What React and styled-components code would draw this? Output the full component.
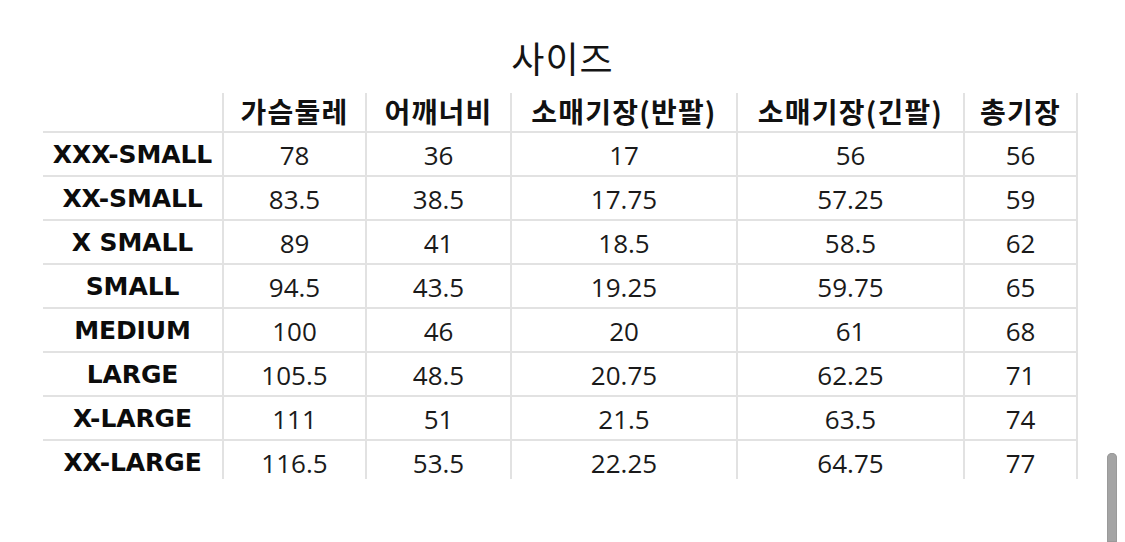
import React from "react";
import styled, { createGlobalStyle } from "styled-components";

const Global = createGlobalStyle`
  html, body { margin: 0; padding: 0; background: #ffffff; }
  body { width: 1125px; height: 542px; overflow: hidden; }
`;

const Page = styled.div`
  position: relative;
  width: 1125px;
  height: 542px;
  overflow: hidden;
  background: #fff;
`;

const Title = styled.h1`
  box-sizing: border-box;
  margin: 0;
  height: 93px;
  padding-top: 33px;
  text-align: center;
  font-family: "Noto Sans CJK KR", "Noto Sans", sans-serif;
  font-weight: 400;
  font-size: 36px;
  line-height: 48px;
  letter-spacing: 1px;
  color: #141414;
`;

const TableClip = styled.div`
  margin-left: 43px;
  width: 1037px;
  height: 386px;
  overflow: hidden;
`;

const Grid = styled.div`
  display: grid;
  grid-template-columns: 181px 143px 145px 226px 227px 113px;
  grid-template-rows: 40px;
  grid-auto-rows: 44px;
`;

const Cell = styled.div`
  box-sizing: border-box;
  display: flex;
  align-items: center;
  justify-content: center;
  border-right: 2px solid #e2e2e2;
  border-bottom: 2px solid #e2e2e2;
  white-space: nowrap;
  color: #1a1a1a;
  font-family: "Open Sans", "Noto Sans", sans-serif;
  font-size: 26px;
  line-height: 34px;
  font-weight: 400;
  padding-top: 1px;
`;

const HeadCell = styled(Cell)`
  font-family: "Noto Sans CJK KR", "Noto Sans", sans-serif;
  font-weight: 700;
  font-size: 28px;
  line-height: 32px;
  letter-spacing: 1.2px;
  color: #111;
  padding-top: 0;
  padding-bottom: 3px;
`;

const LabelCell = styled(Cell)`
  font-family: "DejaVu Sans", "Noto Sans", sans-serif;
  font-weight: 700;
  font-size: 25px;
  color: #0c0c0c;
  letter-spacing: -0.1px;
`;

const ScrollThumb = styled.div`
  position: absolute;
  right: 8px;
  top: 453px;
  bottom: 0;
  width: 10px;
  border-radius: 5px 5px 0 0;
  background: #a4a4a4;
  box-shadow: inset 0 0 0 1px #9a9a9a;
`;

const headers = ["가슴둘레", "어깨너비", "소매기장(반팔)", "소매기장(긴팔)", "총기장"];

const rows = [
  ["XXX-SMALL", "78", "36", "17", "56", "56"],
  ["XX-SMALL", "83.5", "38.5", "17.75", "57.25", "59"],
  ["X SMALL", "89", "41", "18.5", "58.5", "62"],
  ["SMALL", "94.5", "43.5", "19.25", "59.75", "65"],
  ["MEDIUM", "100", "46", "20", "61", "68"],
  ["LARGE", "105.5", "48.5", "20.75", "62.25", "71"],
  ["X-LARGE", "111", "51", "21.5", "63.5", "74"],
  ["XX-LARGE", "116.5", "53.5", "22.25", "64.75", "77"],
];

export default function App() {
  return (
    <Page>
      <Global />
      <Title>사이즈</Title>
      <TableClip>
        <Grid>
          <HeadCell />
          {headers.map((h) => (
            <HeadCell key={h}>{h}</HeadCell>
          ))}
          {rows.map((r) => (
            <React.Fragment key={r[0]}>
              <LabelCell>{r[0]}</LabelCell>
              {r.slice(1).map((v, i) => (
                <Cell key={i}>{v}</Cell>
              ))}
            </React.Fragment>
          ))}
        </Grid>
      </TableClip>
      <ScrollThumb />
    </Page>
  );
}
